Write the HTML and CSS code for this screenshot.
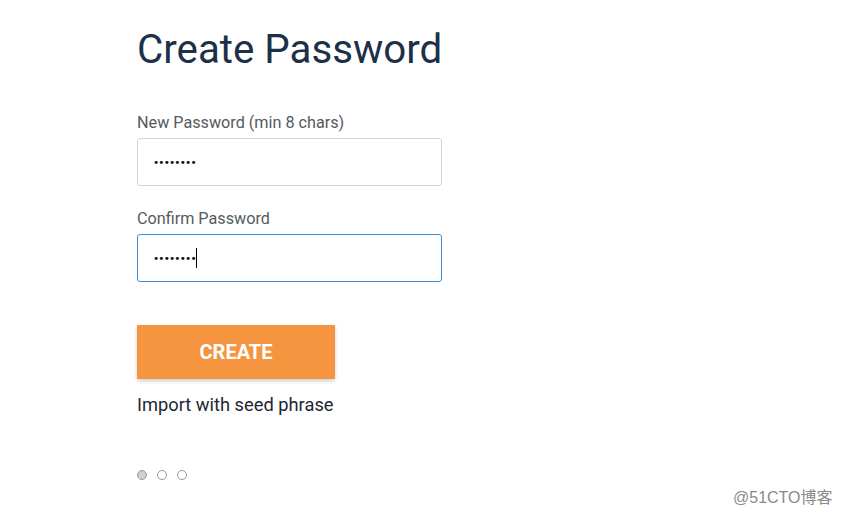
FILE: index.html
```html
<!DOCTYPE html>
<html>
<head>
<meta charset="utf-8">
<link rel="stylesheet" href="styles.css">
</head>
<body>
<main class="page">
  <h1 class="title">Create Password</h1>
  <label class="field">
    <span class="label">New Password (min 8 chars)</span>
    <span class="input"><span class="dots">••••••••</span></span>
  </label>
  <label class="field">
    <span class="label">Confirm Password</span>
    <span class="input focused"><span class="dots">••••••••</span><span class="caret"></span></span>
  </label>
  <button class="create">CREATE</button>
  <div class="import">Import with seed phrase</div>
  <div class="pager">
    <span class="dot active"></span>
    <span class="dot"></span>
    <span class="dot"></span>
  </div>
</main>
<div class="watermark">@51CTO博客</div>
</body>
</html>
```
FILE: styles.css
```css
html, body {
  margin: 0;
  padding: 0;
  background: #fff;
  width: 842px;
  height: 513px;
  overflow: hidden;
  font-family: Roboto, "Noto Sans", sans-serif;
}
.page {
  display: flex;
  flex-direction: column;
  align-items: flex-start;
  padding: 24px 0 0 137px;
}
.title {
  margin: 0;
  font-size: 40.3px;
  font-weight: 400;
  line-height: 52px;
  color: #1d3047;
  letter-spacing: 0;
}
.field {
  display: flex;
  flex-direction: column;
  margin-top: 37px;
}
.field + .field {
  margin-top: 23px;
}
.label {
  font-size: 16.2px;
  line-height: 20px;
  color: #555a5e;
  margin-bottom: 5px;
}
.input {
  box-sizing: border-box;
  width: 305px;
  height: 48px;
  border: 1px solid #d4d4d4;
  border-radius: 3px;
  display: flex;
  align-items: center;
  padding-left: 15px;
}
.input.focused {
  border-color: #3a8fd8;
}
.dots {
  font-family: "DejaVu Sans", sans-serif;
  font-size: 10.5px;
  letter-spacing: -0.85px;
  color: #111;
}
.caret {
  width: 1px;
  height: 20px;
  background: #000;
  margin-left: 0;
}
.create {
  margin-top: 43px;
  width: 198px;
  height: 54px;
  border: none;
  background: #f6953f;
  color: #fff;
  font-family: Roboto, sans-serif;
  font-weight: 700;
  font-size: 20px;
  box-shadow: 0 2px 4px rgba(0,0,0,0.2);
  padding: 0;
}
.import {
  margin-top: 15px;
  font-size: 18.3px;
  line-height: 22px;
  color: #1c2833;
}
.pager {
  display: flex;
  gap: 10px;
  margin-top: 54px;
}
.dot {
  box-sizing: border-box;
  width: 10px;
  height: 10px;
  border-radius: 50%;
  border: 1px solid #999;
  background: #fff;
}
.dot.active {
  background: #cfcfcf;
}
.watermark {
  position: absolute;
  left: 733px;
  top: 484px;
  font-family: "Liberation Sans", "Noto Sans CJK SC", sans-serif;
  font-size: 16px;
  color: #8a8a8a;
}
```
